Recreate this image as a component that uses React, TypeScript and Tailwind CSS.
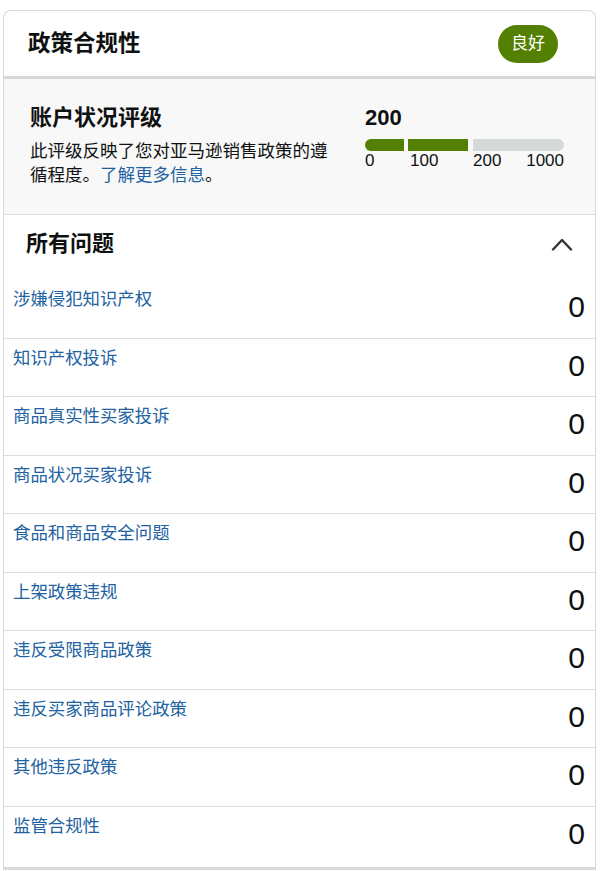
const issues = [
  "涉嫌侵犯知识产权",
  "知识产权投诉",
  "商品真实性买家投诉",
  "商品状况买家投诉",
  "食品和商品安全问题",
  "上架政策违规",
  "违反受限商品政策",
  "违反买家商品评论政策",
  "其他违反政策",
  "监管合规性",
];

const fontStack = { fontFamily: '"Liberation Sans", "Noto Sans CJK SC", sans-serif' };

function RatingBar() {
  return (
    <div className="flex w-[200px] text-[17px] leading-[20px] text-[#0f1111]">
      <div className="w-[39px]">
        <div className="h-[12px] rounded-l-full bg-[#538000]" />
        <span>0</span>
      </div>
      <div className="ml-[4px] w-[60px]">
        <div className="h-[12px] bg-[#538000]" />
        <span className="pl-[2px]">100</span>
      </div>
      <div className="ml-[5px] w-[91px]">
        <div className="h-[12px] rounded-r-full bg-[#d5d9d9]" />
        <div className="flex justify-between">
          <span>200</span>
          <span>1000</span>
        </div>
      </div>
    </div>
  );
}

function Chevron() {
  return (
    <svg width="22" height="14" viewBox="0 0 22 14" fill="none" className="mt-[8px]">
      <polyline
        points="2,12.5 11,3 20,12.5"
        stroke="#333333"
        strokeWidth="2.4"
        strokeLinecap="round"
        strokeLinejoin="round"
      />
    </svg>
  );
}

export default function App() {
  return (
    <div className="min-h-[871px] w-[604px] bg-white pt-[10px] pl-[3px] pr-[8px]" style={fontStack}>
      <div className="overflow-hidden rounded-t-[8px] border-x border-t border-[#d5d9d9]">
        {/* header */}
        <div className="flex h-[68px] items-center justify-between border-b-[3px] border-[#d5d9d9] pl-[24px] pr-[37px]">
          <h1 className="text-[22.5px] font-bold leading-[30px] text-[#0f1111]">政策合规性</h1>
          <span className="flex h-[38px] w-[60px] items-center justify-center rounded-full bg-[#538000] text-[17px] text-white">
            良好
          </span>
        </div>

        {/* account health rating */}
        <div className="flex h-[136px] border-b border-[#dddddd] bg-[#f8f8f8] pl-[26px] pt-[24px]">
          <div className="w-[300px]">
            <h2 className="text-[22px] font-bold leading-[30px] text-[#0f1111]">账户状况评级</h2>
            <p className="mt-[6px] text-[17.5px] leading-[24px] text-[#0f1111]">
              此评级反映了您对亚马逊销售政策的遵循程度。
              <a className="inline-block text-[#2162a1]">了解更多信息</a>。
            </p>
          </div>
          <div className="ml-[35px]">
            <div className="text-[22px] font-bold leading-[30px] text-[#0f1111]">200</div>
            <div className="mt-[6px]">
              <RatingBar />
            </div>
          </div>
        </div>

        {/* all issues */}
        <div className="flex h-[65px] items-start justify-between pl-[22px] pr-[22px] pt-[14px]">
          <h2 className="text-[22px] font-bold leading-[30px] text-[#0f1111]">所有问题</h2>
          <Chevron />
        </div>

        {issues.map((issue, i) => (
          <div
            key={issue}
            className={
              i === issues.length - 1
                ? "flex h-[63px] items-start justify-between border-b-[3px] border-[#d5d9d9] pl-[9px] pr-[10px] pt-[7px]"
                : "flex h-[58.5px] items-start justify-between border-b border-[#dddddd] pl-[9px] pr-[10px] pt-[7px]"
            }
          >
            <a className="text-[17.4px] leading-[24px] text-[#2162a1]">{issue}</a>
            <span className="text-[30px] leading-[40px] text-[#0f1111]">0</span>
          </div>
        ))}
      </div>
    </div>
  );
}
